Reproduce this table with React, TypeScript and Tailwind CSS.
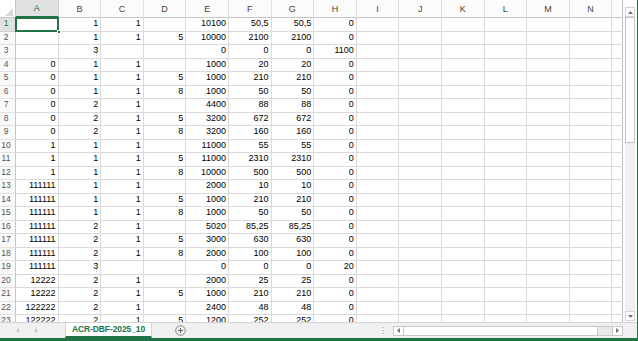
import React from 'react';

const data: string[][] = [
  ['', '1', '1', '', '10100', '50,5', '50,5', '0'],
  ['', '1', '1', '5', '10000', '2100', '2100', '0'],
  ['', '3', '', '', '0', '0', '0', '1100'],
  ['0', '1', '1', '', '1000', '20', '20', '0'],
  ['0', '1', '1', '5', '1000', '210', '210', '0'],
  ['0', '1', '1', '8', '1000', '50', '50', '0'],
  ['0', '2', '1', '', '4400', '88', '88', '0'],
  ['0', '2', '1', '5', '3200', '672', '672', '0'],
  ['0', '2', '1', '8', '3200', '160', '160', '0'],
  ['1', '1', '1', '', '11000', '55', '55', '0'],
  ['1', '1', '1', '5', '11000', '2310', '2310', '0'],
  ['1', '1', '1', '8', '10000', '500', '500', '0'],
  ['111111', '1', '1', '', '2000', '10', '10', '0'],
  ['111111', '1', '1', '5', '1000', '210', '210', '0'],
  ['111111', '1', '1', '8', '1000', '50', '50', '0'],
  ['111111', '2', '1', '', '5020', '85,25', '85,25', '0'],
  ['111111', '2', '1', '5', '3000', '630', '630', '0'],
  ['111111', '2', '1', '8', '2000', '100', '100', '0'],
  ['111111', '3', '', '', '0', '0', '0', '20'],
  ['12222', '2', '1', '', '2000', '25', '25', '0'],
  ['12222', '2', '1', '5', '1000', '210', '210', '0'],
  ['122222', '2', '1', '', '2400', '48', '48', '0'],
  ['122222', '2', '1', '5', '1200', '252', '252', '0'],
];

const letters = ['A', 'B', 'C', 'D', 'E', 'F', 'G', 'H', 'I', 'J', 'K', 'L', 'M', 'N', ''];

function Tri({ dir, color = '#6e6e6e' }: { dir: 'up' | 'down' | 'left' | 'right'; color?: string }) {
  const pts =
    dir === 'up'
      ? '0,3 2.5,0 5,3'
      : dir === 'down'
      ? '0,0 5,0 2.5,3'
      : dir === 'left'
      ? '3,0 3,5 0,2.5'
      : '0,0 0,5 3,2.5';
  const w = dir === 'up' || dir === 'down' ? 5 : 3;
  const h = dir === 'up' || dir === 'down' ? 3 : 5;
  return (
    <svg width={w} height={h} viewBox={`0 0 ${w} ${h}`}>
      <polygon points={pts} fill={color} />
    </svg>
  );
}

function Sheet() {
  const cells: React.ReactNode[] = [];
  cells.push(
    <div key="corner" className="relative bg-white border-r border-b border-[#c6c6c6]">
      <svg width="16" height="18" className="absolute left-0 top-0">
        <polygon points="13,8 13,16 5,16" fill="#d8d8d8" />
      </svg>
    </div>
  );
  letters.forEach((l, i) => {
    const sel = i === 0;
    cells.push(
      <div
        key={'h' + i}
        className={
          sel
            ? 'flex items-end justify-center pb-[3px] leading-[9px] bg-[#e1e1e1] text-[#217346] border-r border-[#d0d0d0] border-b-2 border-b-[#217346]'
            : i === 14
            ? 'flex items-end justify-center pb-[3px] leading-[9px] bg-[#fbfbfb] text-[#444] border-r border-r-[#bdbdbd] border-b border-b-[#c6c6c6]'
            : 'flex items-end justify-center pb-[3px] leading-[9px] bg-[#fbfbfb] text-[#444] border-r border-r-[#e0e0e0] border-b border-b-[#c6c6c6]'
        }
      >
        {l}
      </div>
    );
  });
  data.forEach((row, r) => {
    const selRow = r === 0;
    cells.push(
      <div
        key={'r' + r}
        className={
          selRow
            ? 'flex items-end justify-center pr-[3px] pb-[2.5px] leading-[9px] text-[8.5px] bg-[#e1e1e1] text-[#217346] border-r border-r-[#c6c6c6] border-b border-b-[#d0d0d0]'
            : 'flex items-end justify-center pr-[3px] pb-[2.5px] leading-[9px] text-[8.5px] bg-[#fafafa] text-[#555] border-r border-r-[#c6c6c6] border-b border-b-[#e2e2e2]'
        }
      >
        {r + 1}
      </div>
    );
    for (let c = 0; c < 15; c++) {
      const v = c < 8 ? row[c] : '';
      const isSel = r === 0 && c === 0;
      cells.push(
        <div
          key={r + '-' + c}
          className={
            c === 14
              ? 'relative flex items-end justify-end pr-[2px] pb-[2.5px] leading-[9px] border-r border-r-[#bdbdbd] border-b border-b-[#dadada]'
              : 'relative flex items-end justify-end pr-[2px] pb-[2.5px] leading-[9px] border-r border-b border-[#dadada]'
          }
        >
          {v}
          {isSel && (
            <>
              <div className="absolute -left-[1px] -top-[1px] -right-[1px] -bottom-[1px] border-2 border-[#217346] z-10" />
              <div className="absolute -right-[3px] -bottom-[3px] w-[4px] h-[4px] bg-[#217346] border border-white z-20" />
            </>
          )}
        </div>
      );
    }
  });
  return (
    <div className="w-[623px] h-[322px] overflow-hidden bg-white">
      <div className="grid grid-cols-[16px_repeat(14,42.6px)_10.6px] grid-rows-[18.3px_repeat(23,13.5px)]">
        {cells}
      </div>
    </div>
  );
}

function VScroll() {
  return (
    <div className="w-[14px] h-[322px] flex flex-col bg-white pt-[7px] pb-[1px] px-[2px]">
      <div className="h-[10px] flex items-center justify-center bg-white border border-[#d4d4d4]">
        <Tri dir="up" />
      </div>
      <div className="flex-1 bg-[#f0f0f0]">
        <div className="h-[126px] bg-white border border-[#c4c4c4]" />
      </div>
      <div className="h-[10px] flex items-center justify-center bg-white border border-[#d4d4d4]">
        <Tri dir="down" />
      </div>
    </div>
  );
}

function BottomBar() {
  return (
    <div className="h-[16px] flex items-stretch bg-[#f0f0f0] border-t border-[#d4d4d4]">
      <div className="w-[65px] flex items-center pl-[16px] gap-[16px]">
        <Tri dir="left" color="#c4c4c4" />
        <Tri dir="right" color="#c4c4c4" />
      </div>
      <div className="w-[87px] flex items-center justify-center bg-white border-x border-[#d4d4d4] border-b-2 border-b-[#217346] text-[#217346] font-bold text-[8.5px] leading-[9px] tracking-[-0.1px]">
        ACR-DBF-2025_10
      </div>
      <div className="ml-[23px] flex items-center">
        <svg width="11" height="11" viewBox="0 0 11 11">
          <circle cx="5.5" cy="5.5" r="4.8" fill="none" stroke="#7a7a7a" strokeWidth="0.9" />
          <path d="M5.5 3 V8 M3 5.5 H8" stroke="#6a6a6a" strokeWidth="1" />
        </svg>
      </div>
      <div className="flex-1" />
      <div className="flex items-center">
        <svg width="2" height="8" viewBox="0 0 2 8">
          <rect x="0.5" y="0" width="1" height="1" fill="#9a9a9a" />
          <rect x="0.5" y="3" width="1" height="1" fill="#9a9a9a" />
          <rect x="0.5" y="6" width="1" height="1" fill="#9a9a9a" />
        </svg>
      </div>
      <div className="ml-[9px] w-[230px] flex items-center">
        <div className="w-full h-[10px] flex border border-[#c8c8c8] bg-[#e8e8e8]">
          <div className="w-[10px] flex items-center justify-center bg-white border-r border-[#c8c8c8]">
            <Tri dir="left" />
          </div>
          <div className="w-[194px] bg-white border-r border-[#c8c8c8]" />
          <div className="flex-1" />
          <div className="w-[10px] flex items-center justify-center bg-white border-l border-[#c8c8c8]">
            <Tri dir="right" />
          </div>
        </div>
      </div>
      <div className="w-[14px]" />
    </div>
  );
}

export default function App() {
  return (
    <div className="w-[638px] h-[341px] flex flex-col overflow-hidden bg-white font-['Liberation_Sans',Arial,sans-serif] text-[9px] text-black">
      <div className="flex h-[338px]">
        <div className="w-[637px] flex flex-col">
          <div className="flex h-[322px]">
            <Sheet />
            <VScroll />
          </div>
          <BottomBar />
        </div>
        <div className="w-[1px] bg-[#217346]" />
      </div>
      <div className="h-[3px] bg-[#217346]" />
    </div>
  );
}
